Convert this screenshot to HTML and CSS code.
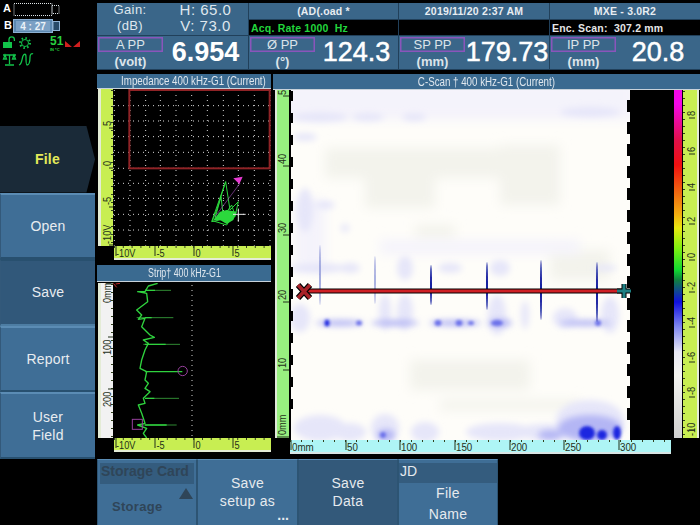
FILE: index.html
```html
<!DOCTYPE html>
<html lang="en">
<head>
<meta charset="utf-8">
<title>Inspection screen</title>
<link rel="stylesheet" href="styles.css">
</head>
<body>
<div class="screen">
  <aside class="side">
    <div class="status">
      <svg class="status-art" viewBox="0 0 96 126" width="96" height="126">
        <text class="st-letter" x="3" y="12">A</text>
        <rect class="st-dotted" x="14" y="3.500" width="38" height="12"/>
        <rect class="st-dotted" x="52" y="5.500" width="7" height="8"/>
        <text class="st-letter" x="4" y="29">B</text>
        <rect class="st-batt" x="13.500" y="19.500" width="39" height="13"/>
        <rect class="st-battin" x="16" y="21" width="34" height="10"/>
        <rect class="st-battcap" x="53" y="21.500" width="6.500" height="9"/>
        <text class="st-time" x="33" y="29.500">4 : 27</text>
        <rect class="st-green" x="3" y="42" width="9" height="6"/>
        <path class="st-line" d="M9 42v-2.500a2.700 2.700 0 0 1 5.400 0v1.500"/>
        <circle class="st-gear" cx="25" cy="43" r="3.500"/>
        <circle class="st-gear-out" cx="25" cy="43" r="5"/>
        <text class="st-temp" x="50" y="45">51</text>
        <text class="st-unit" x="50" y="50.500">IN *C</text>
        <path class="st-red" d="M65 41l7 6h-7zM80 41v6h-7z"/>
        <path class="st-line" d="M3 55h13M9.500 55v9M5 65h9M5 55l-1.500 4h3zM14 55l-1.500 4h3z"/>
        <path class="st-line" d="M19 65c3-1 3-7 4-9s3-3 3 1 0 8 1 8 3-1 3-8c0-3 2-4 3-3"/>
      </svg>
    </div>
    <nav class="menu">
      <div class="menu-btn menu-active">File</div>
      <div class="menu-btn">Open</div>
      <div class="menu-btn menu-dark">Save</div>
      <div class="menu-btn">Report</div>
      <div class="menu-btn">User<br>Field</div>
    </nav>
  </aside>

  <main class="main">
    <section class="readouts">
      <div class="cell gain">
        <div class="gain-col"><span>Gain:</span><span>(dB)</span></div>
        <div class="gain-col gain-val"><span>H: 65.0</span><span>V: 73.0</span></div>
      </div>
      <div class="cell head">(AD(.oad *</div>
      <div class="cell head">2019/11/20 2:37 AM</div>
      <div class="cell head">MXE - 3.0R2</div>
      <div class="cell info info-green">Acq. Rate 1000&nbsp; Hz</div>
      <div class="cell info"></div>
      <div class="cell info">Enc. Scan:&nbsp; 307.2 mm</div>
      <div class="cell pp">
        <div class="pp-side"><span class="pp-label">A PP</span><span class="pp-unit">(volt)</span></div>
        <div class="pp-value pp-value-strong">6.954</div>
      </div>
      <div class="cell pp">
        <div class="pp-side"><span class="pp-label">Ø PP</span><span class="pp-unit">(°)</span></div>
        <div class="pp-value">124.3</div>
      </div>
      <div class="cell pp">
        <div class="pp-side"><span class="pp-label">SP PP</span><span class="pp-unit">(mm)</span></div>
        <div class="pp-value">179.73</div>
      </div>
      <div class="cell pp">
        <div class="pp-side"><span class="pp-label">IP PP</span><span class="pp-unit">(mm)</span></div>
        <div class="pp-value">20.8</div>
      </div>
    </section>

    <section class="panels">
      <div class="left-stack">
        <div class="title t-left"><span class="squeeze">Impedance 400 kHz-G1 (Current)</span></div>
        <div class="plot-grid">
          <svg class="vruler lime" viewBox="0 0 12 157" width="12" height="157">
            <line class="tk-minor" x1="11" y1="1" x2="11" y2="157"/>
            <path class="tk-major" d="M8 39H12M8 79H12M8 118H12M8 156H12"/>
            <text class="rtxt" transform="translate(9.500 37) rotate(-90) scale(.8 1)">5</text>
            <text class="rtxt" transform="translate(9.500 77) rotate(-90) scale(.8 1)">0</text>
            <text class="rtxt" transform="translate(9.500 116) rotate(-90) scale(.8 1)">-5</text>
            <text class="rtxt" transform="translate(9.500 155) rotate(-90) scale(.8 1)">-10V</text>
          </svg>
          <svg class="plot" viewBox="54 57 474 471" width="158" height="157">
            <path class="grid-dots" d="M58 60V527M105 60V527M152 60V527M196 60V527M243 60V527M290 60V527M337 60V527M385 60V527M430 60V527M478 60V527M525 60V527M54 107H527M54 153H527M54 200H527M54 247H527M54 295H527M54 340H527M54 385H527M54 433H527M54 480H527"/>
            <rect class="gate" x="103" y="60" width="421" height="235"/>
            <path class="liss" d="M392 335L350 455L420 440L430 395L405 420L392 335L365 420L352 452L395 465L418 430L410 405L385 440L378 380L360 445L415 445"/>
            <path class="liss-fill" d="M355 450L375 425L395 420L425 425L415 450L395 462L375 450Z"/>
            <path class="liss-thin" d="M435 340L360 440"/>
            <path class="marker-pink" d="M415 325L443 320L433 342Z"/>
            <path class="cross" d="M414 433H452M430 416V455"/>
          </svg>
          <div class="corner"></div>
          <svg class="hruler lime" viewBox="0 0 157 12" width="157" height="12">
            <line class="tk-minor-h" x1="0" y1="1" x2="157" y2="1"/>
            <path class="tk-major" d="M2 0V10M41 0V10M80 0V10M119 0V10"/>
            <text class="rtxt" transform="translate(2 10.500) scale(.8 1)">-10V</text>
            <text class="rtxt" transform="translate(42.500 10.500) scale(.8 1)">-5</text>
            <text class="rtxt" transform="translate(81.500 10.500) scale(.8 1)">0</text>
            <text class="rtxt" transform="translate(120.500 10.500) scale(.8 1)">5</text>
          </svg>
        </div>
        <div class="title t-strip"><span class="squeeze squeeze-strip">Strip† 400 kHz-G1</span></div>
        <div class="plot-grid plot-grid-strip">
          <svg class="vruler white" viewBox="0 0 12 155" width="12" height="155">
            <line class="tk-minor" x1="11" y1="1" x2="11" y2="155"/>
            <path class="tk-major" d="M7 54H12M7 106H12M5 1H12"/>
            <text class="rtxt" transform="translate(9.500 20) rotate(-90) scale(.8 1)">0mm</text>
            <text class="rtxt" transform="translate(9.500 72) rotate(-90) scale(.8 1)">100</text>
            <text class="rtxt" transform="translate(9.500 124) rotate(-90) scale(.8 1)">200</text>
          </svg>
          <svg class="plot" viewBox="54 69 474 465" width="158" height="155">
            <path class="grid-dots" d="M291 75V534"/>
            <path class="red-mark" d="M55 70L65 82M62 72L75 70"/>
            <path class="spike" d="M150 91H228M125 173H235M145 253H255M150 415H252M130 495H245"/>
            <path class="spike spike-strong" d="M150 335H262M150 253H212M150 173H170M150 91H180M150 495H215M150 415H178"/>
            <path class="trace" d="M188 70L160 78L150 95L128 95L155 100L158 125L145 135L125 150L140 165L130 178L150 175L140 200L165 225L178 232L145 240L160 250L150 270L140 300L135 325L155 335L150 360L160 370L150 385L165 395L145 415L150 430L130 435L140 460L150 490L128 495L155 505L145 520L155 534"/>
            <circle class="mark-purple" cx="263" cy="333" r="14"/>
            <rect class="mark-purple" x="112" y="478" width="30" height="30"/>
          </svg>
          <div class="corner"></div>
          <svg class="hruler lime" viewBox="0 0 157 12" width="157" height="12">
            <line class="tk-minor-h" x1="0" y1="1" x2="157" y2="1"/>
            <path class="tk-major" d="M2 0V10M41 0V10M80 0V10M119 0V10"/>
            <text class="rtxt" transform="translate(2 10.500) scale(.8 1)">-10V</text>
            <text class="rtxt" transform="translate(42.500 10.500) scale(.8 1)">-5</text>
            <text class="rtxt" transform="translate(81.500 10.500) scale(.8 1)">0</text>
            <text class="rtxt" transform="translate(120.500 10.500) scale(.8 1)">5</text>
          </svg>
        </div>
      </div>

      <div class="right-stack">
        <div class="title t-right"><span class="squeeze">C-Scan † 400 kHz-G1 (Current)</span></div>
        <div class="cscan-grid">
          <svg class="ruler-green" viewBox="0 0 12 348" width="12" height="348">
            <path class="tk-major" d="M6 6H12M6 76H12M6 145H12M6 212H12M6 280H12M0 347H12"/>
            <text class="rtxt" transform="translate(8.500 5) rotate(-90) scale(.8 1)">5</text>
            <text class="rtxt" transform="translate(8.500 74) rotate(-90) scale(.8 1)">40</text>
            <text class="rtxt" transform="translate(8.500 143) rotate(-90) scale(.8 1)">30</text>
            <text class="rtxt" transform="translate(8.500 210) rotate(-90) scale(.8 1)">20</text>
            <text class="rtxt" transform="translate(8.500 278) rotate(-90) scale(.8 1)">10</text>
            <text class="rtxt" transform="translate(8.500 345) rotate(-90) scale(.8 1)">0mm</text>
          </svg>
          <svg class="cscan" viewBox="289 90 385 350" width="385" height="350">
            <defs>
              <filter id="b6" x="-50%" y="-50%" width="200%" height="200%"><feGaussianBlur stdDeviation="6"/></filter>
              <filter id="b3" x="-50%" y="-50%" width="200%" height="200%"><feGaussianBlur stdDeviation="3"/></filter>
              <filter id="b1" x="-300%" y="-20%" width="700%" height="140%"><feGaussianBlur stdDeviation="0.500"/></filter>
              <filter id="b2" x="-100%" y="-50%" width="300%" height="200%"><feGaussianBlur stdDeviation="1.600"/></filter>
              <clipPath id="img"><rect x="291" y="90" width="339" height="350"/></clipPath>
            </defs>
            <g clip-path="url(#img)">
              <rect class="c-base" x="291" y="90" width="339" height="350"/>
              <g class="c-grey" filter="url(#b6)">
                <rect x="325" y="148" width="180" height="30"/>
                <rect x="365" y="178" width="70" height="30"/>
                <rect x="415" y="225" width="40" height="15"/>
                <rect x="500" y="145" width="60" height="60"/>
                <rect x="550" y="250" width="60" height="30"/>
                <rect x="410" y="360" width="120" height="30"/>
                <rect x="440" y="400" width="140" height="10"/>
              </g>
              <g class="c-lav" filter="url(#b6)">
                <rect x="285" y="80" width="350" height="40"/>
                <rect x="295" y="200" width="30" height="70"/>
                <rect x="380" y="240" width="200" height="14"/>
              </g>
              <g class="c-faint" filter="url(#b3)">
                <ellipse cx="320" cy="117" rx="28" ry="5"/>
                <ellipse cx="368" cy="117" rx="16" ry="4"/>
                <ellipse cx="414" cy="117" rx="12" ry="4"/>
                <ellipse cx="590" cy="112" rx="30" ry="5"/>
                <ellipse cx="305" cy="137" rx="12" ry="4"/>
                <ellipse cx="305" cy="210" rx="8" ry="22"/>
                <ellipse cx="325" cy="205" rx="10" ry="4"/>
                <ellipse cx="345" cy="228" rx="4" ry="4"/>
                <ellipse cx="318" cy="268" rx="28" ry="5"/>
                <ellipse cx="350" cy="268" rx="10" ry="5"/>
                <ellipse cx="405" cy="268" rx="8" ry="12"/>
                <ellipse cx="450" cy="268" rx="12" ry="5"/>
                <ellipse cx="500" cy="268" rx="10" ry="8"/>
                <ellipse cx="605" cy="268" rx="12" ry="3"/>
                <ellipse cx="300" cy="318" rx="10" ry="14"/>
                <ellipse cx="385" cy="312" rx="6" ry="18"/>
                <ellipse cx="405" cy="312" rx="8" ry="18"/>
                <ellipse cx="497" cy="315" rx="9" ry="20"/>
                <ellipse cx="525" cy="315" rx="4" ry="14"/>
                <ellipse cx="565" cy="318" rx="12" ry="10"/>
                <ellipse cx="610" cy="315" rx="9" ry="18"/>
                <ellipse cx="320" cy="428" rx="26" ry="13"/>
                <ellipse cx="350" cy="432" rx="16" ry="9"/>
                <ellipse cx="385" cy="428" rx="14" ry="14"/>
                <ellipse cx="425" cy="432" rx="14" ry="10"/>
                <ellipse cx="500" cy="432" rx="34" ry="9"/>
                <ellipse cx="545" cy="432" rx="28" ry="8"/>
                <ellipse cx="590" cy="420" rx="34" ry="20"/>
              </g>
              <g class="c-mid" filter="url(#b3)">
                <ellipse cx="340" cy="323" rx="24" ry="3"/>
                <ellipse cx="395" cy="323" rx="24" ry="3"/>
                <ellipse cx="455" cy="323" rx="26" ry="3"/>
                <ellipse cx="500" cy="323" rx="12" ry="4"/>
                <ellipse cx="585" cy="323" rx="26" ry="3"/>
                <ellipse cx="386" cy="435" rx="9" ry="6"/>
                <ellipse cx="550" cy="435" rx="12" ry="5"/>
                <ellipse cx="590" cy="428" rx="32" ry="13"/>
              </g>
              <g class="c-deep" filter="url(#b2)">
                <ellipse cx="327" cy="323" rx="2.500" ry="3.500"/>
                <ellipse cx="587" cy="433" rx="8" ry="7"/>
                <ellipse cx="617" cy="433" rx="4" ry="7"/>
                <ellipse cx="602" cy="435" rx="5" ry="5"/>
              </g>
              <g class="c-soft" filter="url(#b2)">
                <ellipse cx="359" cy="323" rx="3" ry="2.500"/>
                <ellipse cx="438" cy="323" rx="3.500" ry="3"/>
                <ellipse cx="459" cy="323" rx="3.500" ry="3"/>
                <ellipse cx="471" cy="323" rx="3" ry="2"/>
                <ellipse cx="497" cy="323" rx="6" ry="3"/>
                <ellipse cx="598" cy="323" rx="3" ry="3"/>
                <ellipse cx="383" cy="435" rx="3" ry="3"/>
              </g>
              <g class="c-spike" filter="url(#b1)">
                <ellipse cx="431" cy="285" rx="1" ry="20"/>
                <ellipse cx="487" cy="286" rx="1" ry="24"/>
                <ellipse cx="541" cy="290" rx="1" ry="30"/>
                <ellipse cx="597" cy="292" rx="1" ry="30"/>
              </g>
              <g class="c-spike-faint" filter="url(#b1)">
                <ellipse cx="320" cy="275" rx="0.900" ry="30"/>
                <ellipse cx="375" cy="280" rx="0.800" ry="24"/>
              </g>
            </g>
            <path class="notch-black" d="M289 91h4v10h-4zM289 113h4v10h-4zM289 135h4v10h-4zM289 157h4v10h-4zM289 179h4v10h-4zM289 201h4v10h-4zM289 223h4v10h-4zM289 245h4v10h-4zM289 267h4v10h-4zM289 289h4v10h-4zM289 311h4v10h-4zM289 333h4v10h-4zM289 355h4v10h-4zM289 377h4v10h-4zM289 399h4v10h-4zM289 421h2v10h-2z"/>
            <path class="notch-black" d="M627 100h3v12h-3zM627 122h3v12h-3zM627 144h3v12h-3zM627 166h3v12h-3zM627 188h3v12h-3zM627 210h3v12h-3zM627 232h3v12h-3zM627 254h3v12h-3zM627 276h3v12h-3zM627 298h3v12h-3zM627 320h3v12h-3zM627 342h3v12h-3zM627 364h3v12h-3zM627 386h3v12h-3zM627 408h3v12h-3z"/>
            <line class="cur-black" x1="304" y1="291" x2="622" y2="291"/>
            <line class="cur-red" x1="304" y1="291" x2="622" y2="291"/>
            <path class="x-out" d="M298 285L310 298M310 285L298 298"/>
            <path class="x-in" d="M298 285L310 298M310 285L298 298"/>
            <path class="plus-out" d="M617 291H631M624 284V298"/>
            <path class="plus-in" d="M617 291H631M624 284V298"/>
          </svg>
          <div class="cbar"></div>
          <svg class="ruler-scale" viewBox="0 0 14 348" width="14" height="348">
            <line class="tk-minor-l" x1="1" y1="1" x2="1" y2="348"/>
            <path class="tk-major" d="M6 28H12M6 64H12M6 100H12M6 134H12M6 170H12M6 202H12M6 237H12M6 272H12M6 307H12M6 340H12"/>
            <text class="rtxt" transform="translate(11.500 26) rotate(-90) scale(.8 1)">8</text>
            <text class="rtxt" transform="translate(11.500 62) rotate(-90) scale(.8 1)">6</text>
            <text class="rtxt" transform="translate(11.500 98) rotate(-90) scale(.8 1)">4</text>
            <text class="rtxt" transform="translate(11.500 132) rotate(-90) scale(.8 1)">2</text>
            <text class="rtxt" transform="translate(11.500 168) rotate(-90) scale(.8 1)">0</text>
            <text class="rtxt" transform="translate(11.500 200) rotate(-90) scale(.8 1)">-2</text>
            <text class="rtxt" transform="translate(11.500 235) rotate(-90) scale(.8 1)">-4</text>
            <text class="rtxt" transform="translate(11.500 270) rotate(-90) scale(.8 1)">-6</text>
            <text class="rtxt" transform="translate(11.500 305) rotate(-90) scale(.8 1)">-8</text>
            <text class="rtxt" transform="translate(11.500 346) rotate(-90) scale(.8 1)">-10</text>
          </svg>
          <svg class="ruler-cyan" viewBox="0 0 381 12" width="381" height="12">
            <line class="tk-minor-h tk-cy" x1="0" y1="1" x2="381" y2="1"/>
            <path class="tk-major" d="M1 0V10M56 0V10M110 0V10M165 0V10M220 0V10M274 0V10M329 0V10"/>
            <text class="rtxt" transform="translate(2 10.500) scale(.85 1)">0mm</text>
            <text class="rtxt" transform="translate(57 10.500) scale(.85 1)">50</text>
            <text class="rtxt" transform="translate(111 10.500) scale(.85 1)">100</text>
            <text class="rtxt" transform="translate(166 10.500) scale(.85 1)">150</text>
            <text class="rtxt" transform="translate(221 10.500) scale(.85 1)">200</text>
            <text class="rtxt" transform="translate(275 10.500) scale(.85 1)">250</text>
            <text class="rtxt" transform="translate(330 10.500) scale(.85 1)">300</text>
          </svg>
        </div>
      </div>
    </section>

    <section class="softkeys">
      <div class="key key-disabled">
        <div class="key-field">Storage Card</div>
        <div class="key-body key-body-storage"><span>Storage</span><i class="tri"></i></div>
      </div>
      <div class="key key-more">
        <div class="key-body key-body-high">Save<br>setup as</div>
        <span class="dots">...</span>
      </div>
      <div class="key key-dark">
        <div class="key-body key-body-high">Save<br>Data</div>
      </div>
      <div class="key">
        <div class="key-field key-field-on">JD</div>
        <div class="key-body key-body-wide">File<br>Name</div>
      </div>
    </section>
  </main>
</div>
</body>
</html>
```
FILE: styles.css
```css
* { box-sizing: border-box; }
html, body { margin: 0; padding: 0; background: #000; }
body { width: 700px; height: 525px; overflow: hidden; font-family: "Liberation Sans", Arial, sans-serif; color: #e4e8ec; }
svg { display: block; }

.screen { display: grid; grid-template-columns: 96px 604px; width: 700px; height: 525px; }

/* left column */
.side { display: flex; flex-direction: column; }
.status { height: 126px; }
.st-letter { font: bold 11px "Liberation Sans", sans-serif; fill: #fff; }
.st-dotted { fill: none; stroke: #dfe6ea; stroke-width: 1; stroke-dasharray: 1 1; }
.st-batt { fill: #5c88b0; stroke: #8db0d2; }
.st-battin { fill: #7ba0c4; }
.st-battcap { fill: #274a68; stroke: #8db0d2; }
.st-time { font: bold 10px "Liberation Sans", sans-serif; fill: #eaf2f8; text-anchor: middle; }
.st-green { fill: #12c44a; }
.st-line { fill: none; stroke: #12c44a; stroke-width: 1.300; }
.st-gear { fill: none; stroke: #12c44a; stroke-width: 1; }
.st-gear-out { fill: none; stroke: #12c44a; stroke-width: 2; stroke-dasharray: 1.500 2.400; }
.st-temp { font: bold 12px "Liberation Sans", sans-serif; fill: #27d03f; }
.st-unit { font: bold 4px "Liberation Sans", sans-serif; fill: #27d03f; }
.st-red { fill: #d01f1f; }

.menu { display: flex; flex-direction: column; }
.menu-btn {
  height: 66.600px; width: 95px; display: flex; align-items: center; justify-content: center;
  text-align: center; font-size: 14px; line-height: 18px; letter-spacing: 0.200px; color: #e8ecf0;
  background: #3f6e96; border-top: 2px solid #5b8cb4; border-bottom: 2px solid #28506f; border-left: 1px solid #33597a;
}
.menu-active {
  background: #1a2a38; color: #e3ea5a; font-weight: bold; border: 0;
  clip-path: polygon(0 0, 91% 0, 100% 50%, 91% 100%, 0 100%);
}
.menu-dark { background: #31587a; border-top-color: #28506f; border-bottom-color: #4d7da3; }

/* readouts */
.main { display: flex; flex-direction: column; }
.readouts {
  display: grid; grid-template-columns: 151px 149px 150px 150px; grid-template-rows: 16px 15px 33px;
  column-gap: 1px; row-gap: 1px; margin: 3px 0 0 1px; height: 67px; background: #21405a;
}
.cell { background: #3a6689; }
.gain { grid-row: 1 / span 2; display: grid; grid-template-columns: 66px 1fr; font-size: 13px; }
.gain-col { display: flex; flex-direction: column; align-items: center; line-height: 16px; margin-top: -1px; color: #dfe7ee; letter-spacing: 0.400px; }
.gain-val { font-size: 15px; letter-spacing: 0.500px; }
.head { display: flex; align-items: center; justify-content: center; font-size: 10.500px; font-weight: bold; color: #e8edf2; letter-spacing: 0.200px; }
.info { background: #000; font-size: 10.500px; font-weight: bold; line-height: 16px; padding-left: 2px; white-space: nowrap; color: #e6e6e6; letter-spacing: 0.200px; }
.info-green { color: #22d63c; }
.pp { display: grid; grid-template-columns: 65px 1fr; padding: 1px 0 0 1px; }
.pp-side { display: flex; flex-direction: column; align-items: stretch; height: 31px; }
.pp-label { flex: none; height: 15px; border: 1px solid #8a55bb; box-shadow: inset 0 0 0 0.500px #8a55bb; text-align: center; font-size: 13px; line-height: 13px; color: #dce4ea; }
.pp-unit { flex: none; text-align: center; font-size: 13px; line-height: 19px; font-weight: bold; color: #dce4ea; }
.pp-value { display: flex; align-items: center; justify-content: center; font-size: 27px; color: #fff; padding-bottom: 1px; -webkit-text-stroke: 0.500px #fff; }
.pp-value-strong { font-weight: bold; -webkit-text-stroke: 0; }

/* panels */
.panels { display: grid; grid-template-columns: 174px 427px; column-gap: 2px; margin: 4px 0 0 1px; height: 385px; }
.left-stack, .right-stack { display: flex; flex-direction: column; }
.title {
  background: #3a6a90; color: #dfe7ee; text-align: center; font-size: 13px; line-height: 15px;
  white-space: nowrap; overflow: hidden; border-bottom: 1px solid #c7d2da;
}
.squeeze { display: inline-block; transform: scaleX(.75); }
.squeeze-strip { transform: scaleX(.68); }
.t-left { height: 15px; line-height: 14px; }
.t-right { height: 16px; }
.t-strip { height: 17px; margin-top: 5px; line-height: 16px; }
.plot-grid { display: grid; grid-template-columns: 16px 158px; grid-template-rows: 157px 14px; }
.plot-grid-strip { grid-template-rows: 155px 14px; margin-top: 1px; }
.vruler { box-sizing: content-box; width: 12px; margin-left: 1px; border-left: 3px solid #e4ecd6; }
.lime { background: #c8ee52; }
.white { background: #f2f2f2; }
.plot { background: #000; }
.corner { background: #000; }
.hruler { box-sizing: content-box; margin-left: 1px; border-bottom: 2px solid #e4ecd6; }
.rtxt { font: 11.500px "Liberation Sans", sans-serif; fill: #24301a; }
.tk-major { stroke: #22301a; stroke-width: 1; fill: none; }
.tk-minor { stroke: #33421d; stroke-width: 2; stroke-dasharray: 1 7; }
.tk-minor-h { stroke: #33421d; stroke-width: 2; stroke-dasharray: 1 7.800; }
.tk-cy { stroke-dasharray: 1 10; }
.tk-minor-l { stroke: #33421d; stroke-width: 2; stroke-dasharray: 1 6; }

.grid-dots { fill: none; stroke: #d8d8d8; stroke-width: 3; stroke-dasharray: 3 12; }
.gate { fill: none; stroke: #8f2326; stroke-width: 6; }
.liss { fill: none; stroke: #2bd83c; stroke-width: 3; stroke-linejoin: round; }
.liss-fill { fill: #2bd83c; }
.liss-thin { stroke: #9a4cb0; stroke-width: 2; }
.marker-pink { fill: #e63ad2; }
.cross { stroke: #e8e8e8; stroke-width: 3; }
.trace { fill: none; stroke: #2fd23e; stroke-width: 4; stroke-linejoin: round; }
.spike { fill: none; stroke: #2f8a33; stroke-width: 3; }
.spike-strong { stroke: #2fd23e; stroke-width: 4; }
.mark-purple { fill: none; stroke: #96409c; stroke-width: 3; }
.red-mark { fill: none; stroke: #c4272b; stroke-width: 3; }

/* c-scan */
.cscan-grid { display: grid; grid-template-columns: 16px 385px 9px 17px; grid-template-rows: 348px 16px; }
.ruler-green { grid-column: 1; grid-row: 1; box-sizing: content-box; background: #98f080; margin-left: 2px; border-left: 2px solid #dfe8d8; }
.cscan { grid-column: 2; grid-row: 1 / span 2; background: #000; }
.c-base { fill: #fefdf9; }
.c-grey rect { fill: #f3f3ec; }
.c-lav rect { fill: #f4f3fb; }
.c-faint ellipse { fill: #e6e6f9; }
.c-mid ellipse { fill: #b4b6f4; }
.c-deep ellipse { fill: #1f28e0; }
.c-soft ellipse { fill: #6a70ea; }
.c-spike ellipse { fill: #1520a0; }
.c-spike-faint ellipse { fill: #9aa2dc; }
.notch-black { fill: #000; }
.cur-black { stroke: #000; stroke-width: 5; }
.cur-red { stroke: #cf1f24; stroke-width: 3; }
.x-out { fill: none; stroke: #000; stroke-width: 6; }
.x-in { fill: none; stroke: #a82228; stroke-width: 3.500; }
.plus-out { fill: none; stroke: #000; stroke-width: 5; }
.plus-in { fill: none; stroke: #1e8083; stroke-width: 3; }
.cbar {
  grid-column: 3; grid-row: 1; width: 8px; height: 348px;
  background: linear-gradient(to bottom, #f408e8 0, #f408e8 14px, #e0104a 50px, #f01010 75px, #f07010 105px, #f4b010 125px, #e8e810 138px, #80f010 158px, #10d830 180px, #108040 190px, #1010e0 212px, #8088f0 237px, #e8e8f4 262px, #f4f4f0 285px, #d0d0d0 348px);
}
.ruler-scale { grid-column: 4; grid-row: 1; box-sizing: content-box; background: #c8ee52; border-right: 2px solid #e4ecd6; }
.ruler-cyan { grid-column: 2 / span 3; grid-row: 2; box-sizing: content-box; background: #aef5f5; z-index: 1; margin: 2px 0 0 1px; border-bottom: 2px solid #d8e4e4; }

/* soft keys */
.softkeys { display: grid; grid-template-columns: 100px 101px 100px 100px; margin: 0 0 0 1px; width: 401px; height: 66px; }
.key { position: relative; display: flex; flex-direction: column; background: #3f6e96; border-top: 1px solid #5b8cb4; border-left: 1px solid #2d5473; border-right: 1px solid #2d5473; font-size: 14px; color: #e6eaee; text-align: center; }
.key-dark { background: #33597a; }
.key-body { flex: 1; display: flex; align-items: center; justify-content: center; line-height: 18px; letter-spacing: 0.300px; }
.key-body-high { padding-bottom: 6px; }
.key-body-wide { line-height: 21px; padding-bottom: 4px; }
.key-field { height: 21px; margin: 3px 2px 0; background: #345c7e; text-align: left; line-height: 17px; font-weight: bold; padding-left: 1px; color: #2f4558; white-space: nowrap; overflow: hidden; }
.key-field-on { font-weight: normal; color: #e6eaee; margin: 3px 0 0 0; height: 20px; }
.key-disabled .key-body { color: #2f4558; font-weight: bold; font-size: 13px; }
.key-body-storage { position: relative; justify-content: flex-start; padding-left: 14px; }
.tri { position: absolute; right: 3px; top: 4px; width: 0; height: 0; border-left: 7px solid transparent; border-right: 7px solid transparent; border-bottom: 11px solid #2f4558; }
.dots { position: absolute; right: 8px; bottom: 9px; font-weight: bold; line-height: 10px; }
```
